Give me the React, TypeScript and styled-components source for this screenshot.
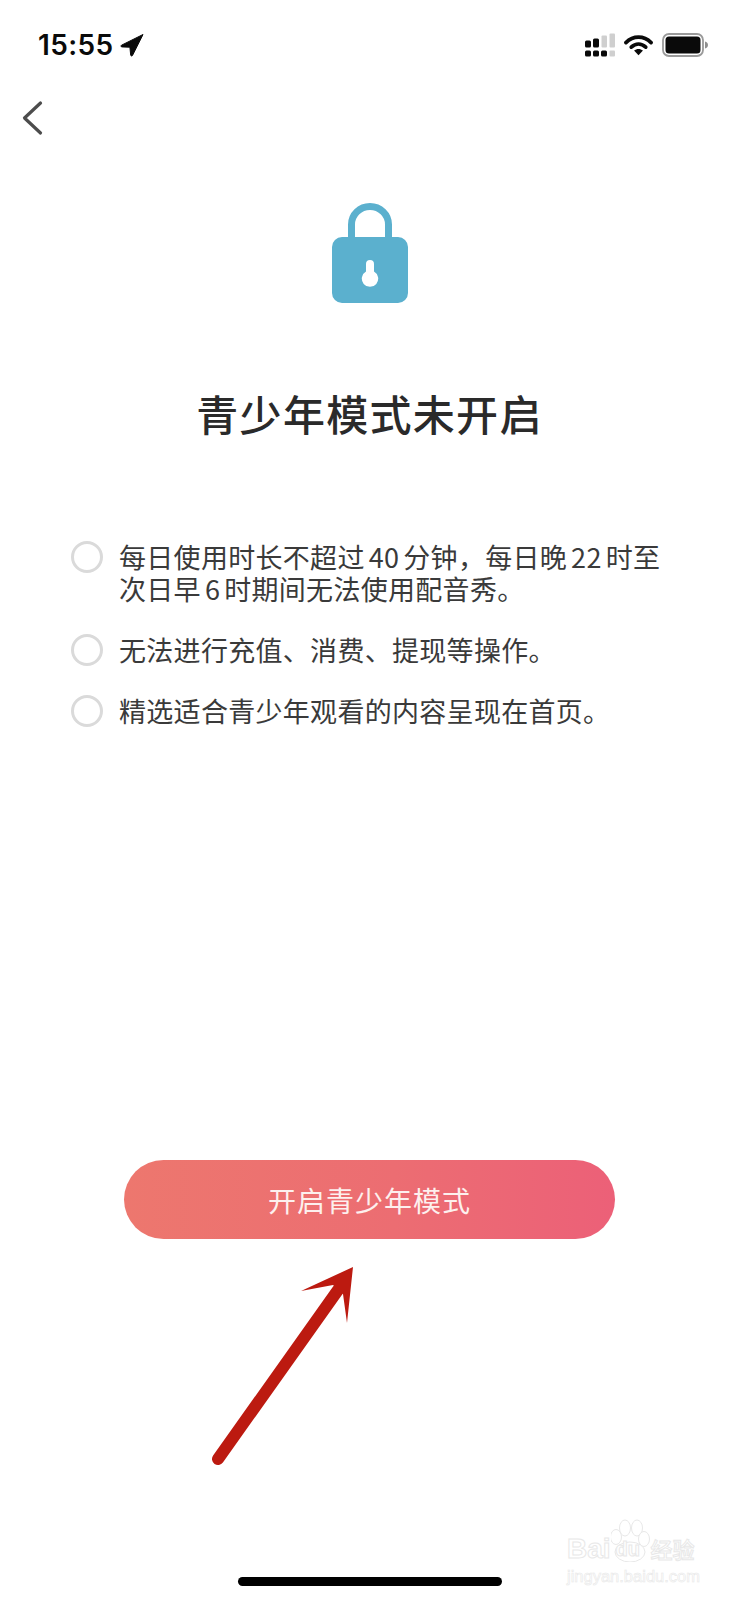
import React from "react";
import styled, { createGlobalStyle } from "styled-components";

const Global = createGlobalStyle`
  html, body { margin: 0; padding: 0; background: #fff; }
  body { font-family: "Inter", "Liberation Sans", "Noto Sans CJK SC", sans-serif; }
`;

const Page = styled.div`
  position: relative;
  width: 739px;
  height: 1600px;
  background: #fff;
  display: flex;
  flex-direction: column;
  overflow: hidden;
`;

const StatusBar = styled.div`
  height: 88px;
  flex: none;
  display: flex;
  justify-content: space-between;
  align-items: flex-start;
  padding: 29px 30px 0 38px;
  box-sizing: border-box;
`;

const TimeGroup = styled.div`
  display: flex;
  align-items: center;
  gap: 6px;
`;

const Time = styled.span`
  font: 600 28px/32px "Inter", "Liberation Sans", sans-serif;
  letter-spacing: 0.4px;
  color: #0a0a0a;
`;

const StatusIcons = styled.div`
  display: flex;
  align-items: center;
  gap: 9px;
  height: 32px;
`;

const NavBar = styled.div`
  height: 60px;
  flex: none;
  padding-left: 20px;
  display: flex;
  align-items: center;
`;

const Hero = styled.div`
  flex: none;
  display: flex;
  flex-direction: column;
  align-items: center;
  padding-top: 55px;
`;

const Title = styled.h1`
  margin: 82px 0 0;
  font: 500 42px/56px "Noto Sans CJK SC", sans-serif;
  color: #2a2a2a;
  letter-spacing: 1.3px;
`;

const List = styled.ul`
  list-style: none;
  margin: 100px 0 0;
  padding: 0 71px;
  display: flex;
  flex-direction: column;
  gap: 29px;
`;

const Item = styled.li`
  display: flex;
  gap: 16px;
  font: 400 27px/32px "Noto Sans CJK SC", sans-serif;
  letter-spacing: 0.3px;
  color: #3a3a3a;
`;

const Radio = styled.span`
  flex: none;
  width: 32px;
  height: 32px;
  box-sizing: border-box;
  border: 3px solid #dadada;
  border-radius: 50%;
`;

const ItemText = styled.span`
  white-space: nowrap;
`;

const Num = styled.span`
  margin: 0 4px;
`;

const CtaWrap = styled.div`
  margin-top: auto;
  display: flex;
  justify-content: center;
  padding-bottom: 361px;
`;

const Cta = styled.button`
  width: 491px;
  height: 79px;
  border: 0;
  border-radius: 40px;
  background: linear-gradient(90deg, #ed776e 0%, #ec6d72 55%, #ec6078 100%);
  color: #fdf0ee;
  font: 400 28px/34px "Noto Sans CJK SC", sans-serif;
  letter-spacing: 1px;
  padding: 0;
`;

const Arrow = styled.svg`
  position: absolute;
  left: 200px;
  top: 1250px;
`;

const Watermark = styled.div`
  position: absolute;
  left: 567px;
  top: 1518px;
  display: flex;
  flex-direction: column;
  align-items: flex-start;
  color: #fff;
  -webkit-text-stroke: 1px #e8e8e8;
`;

const WmRow = styled.div`
  display: flex;
  align-items: flex-end;
  height: 44px;
`;

const WmLatin = styled.span`
  font: 700 28px/26px "Liberation Sans", sans-serif;
`;

const WmCn = styled.span`
  font: 500 22px/28px "Noto Sans CJK SC", sans-serif;
`;

const PawBox = styled.div`
  position: relative;
  width: 40px;
  height: 44px;
`;

const Paw = styled.svg`
  position: absolute;
  left: 0;
  top: 0;
`;

const PawText = styled.span`
  position: absolute;
  left: 5px;
  bottom: 1px;
  font: 700 20px/24px "Liberation Sans", sans-serif;
`;

const WmUrl = styled.div`
  font: 400 16.5px/18px "Liberation Sans", sans-serif;
  -webkit-text-stroke: 0.6px #e8e8e8;
  margin-top: 5px;
`;

const Home = styled.div`
  position: absolute;
  left: 238px;
  top: 1577px;
  width: 264px;
  height: 9px;
  border-radius: 5px;
  background: #000;
`;

export default function App() {
  return (
    <Page>
      <Global />
      <StatusBar>
        <TimeGroup>
          <Time>15:55</Time>
          <svg width="24" height="24" viewBox="0 0 24 24">
            <path d="M23 1.5 1.5 12.2c-.9.5-.6 1.7.4 1.7l8 .3.8 7.9c.1 1 1.4 1.2 1.8.3L23 1.5Z" fill="#0a0a0a" stroke="#0a0a0a" strokeLinejoin="round" />
          </svg>
        </TimeGroup>
        <StatusIcons>
          <svg width="30" height="24" viewBox="0 0 30 24">
            <g fill="#0a0a0a">
              <rect x="0" y="7.500" width="6" height="7" rx="1.500" />
              <rect x="8" y="5.500" width="6" height="9" rx="1.500" />
              <rect x="0" y="17.500" width="6" height="6" rx="1.500" />
              <rect x="8" y="17.500" width="6" height="6" rx="1.500" />
              <rect x="16" y="17.500" width="6" height="6" rx="1.500" />
            </g>
            <g fill="#cfcfcf">
              <rect x="16.500" y="2.500" width="5.500" height="12" rx="1" />
              <rect x="24.500" y="0.500" width="5.500" height="14" rx="1" />
              <rect x="24.500" y="17.500" width="5.500" height="6" rx="1" />
            </g>
          </svg>
          <svg width="29" height="22" viewBox="0 0 30 22">
            <path d="M2 8.500C9.500 1 20.500 1 28 8.500" fill="none" stroke="#0a0a0a" strokeWidth="3.800" strokeLinecap="round" />
            <path d="M7.500 13.200c4.500-4.200 10.500-4.200 15 0" fill="none" stroke="#0a0a0a" strokeWidth="3.800" strokeLinecap="round" />
            <path d="M15 21.500l-4.600-4.700c2.700-2.200 6.500-2.200 9.200 0L15 21.500Z" fill="#0a0a0a" />
          </svg>
          <svg width="47" height="24" viewBox="0 0 47 24">
            <rect x="1" y="1" width="40" height="22" rx="6" fill="none" stroke="#9a9a9a" strokeWidth="1.800" />
            <rect x="3.500" y="3.500" width="35" height="17" rx="3.500" fill="#0a0a0a" />
            <path d="M43 8.500c1.800.5 3 1.800 3 3.500s-1.200 3-3 3.500Z" fill="#8f8f8f" />
          </svg>
        </StatusIcons>
      </StatusBar>
      <NavBar>
        <svg width="28" height="36" viewBox="0 0 28 36">
          <path d="M20.500 3 4.500 18l16 15" fill="none" stroke="#4c4c4c" strokeWidth="3.200" strokeLinecap="round" strokeLinejoin="round" />
        </svg>
      </NavBar>
      <Hero>
        <svg width="76" height="100" viewBox="0 0 76 100">
          <path d="M19.500 40V21.500a18.500 18 0 0 1 37 0V40" fill="none" stroke="#5bb0ce" strokeWidth="7" />
          <path fillRule="evenodd" fill="#5bb0ce" d="M10 34h56a10 10 0 0 1 10 10v46a10 10 0 0 1-10 10H10A10 10 0 0 1 0 90V44a10 10 0 0 1 10-10Zm28 23a4 4 0 0 0-4 4v7.500a8.200 8.200 0 1 0 8 0V61a4 4 0 0 0-4-4Z" />
        </svg>
        <Title>青少年模式未开启</Title>
      </Hero>
      <List>
        <Item>
          <Radio />
          <ItemText>
            每日使用时长不超过<Num>40</Num>分钟，每日晚<Num>22</Num>时至
            <br />
            次日早<Num>6</Num>时期间无法使用配音秀。
          </ItemText>
        </Item>
        <Item>
          <Radio />
          <ItemText>无法进行充值、消费、提现等操作。</ItemText>
        </Item>
        <Item>
          <Radio />
          <ItemText>精选适合青少年观看的内容呈现在首页。</ItemText>
        </Item>
      </List>
      <CtaWrap>
        <Cta>开启青少年模式</Cta>
      </CtaWrap>
      <Arrow width="170" height="220" viewBox="0 0 170 220">
        <path d="M18 209 138 40" fill="none" stroke="#bc1a10" strokeWidth="12" strokeLinecap="round" />
        <path d="M153 17 101 41 133 35 143 44 147 73Z" fill="#bc1a10" />
      </Arrow>
      <Watermark>
        <WmRow>
          <WmLatin>Bai</WmLatin>
          <PawBox>
            <Paw width="40" height="44" viewBox="0 0 40 44">
              <g fill="#fff" stroke="#e8e8e8" strokeWidth="1">
                <ellipse cx="5" cy="19" rx="5.500" ry="7.500" />
                <ellipse cx="14" cy="10" rx="5.500" ry="8" />
                <ellipse cx="26" cy="10" rx="5.500" ry="8" />
                <ellipse cx="33" cy="21" rx="5.500" ry="7.500" />
                <ellipse cx="19" cy="34" rx="15" ry="10" />
              </g>
            </Paw>
            <PawText>du</PawText>
          </PawBox>
          <WmCn>经验</WmCn>
        </WmRow>
        <WmUrl>jingyan.baidu.com</WmUrl>
      </Watermark>
      <Home />
    </Page>
  );
}
